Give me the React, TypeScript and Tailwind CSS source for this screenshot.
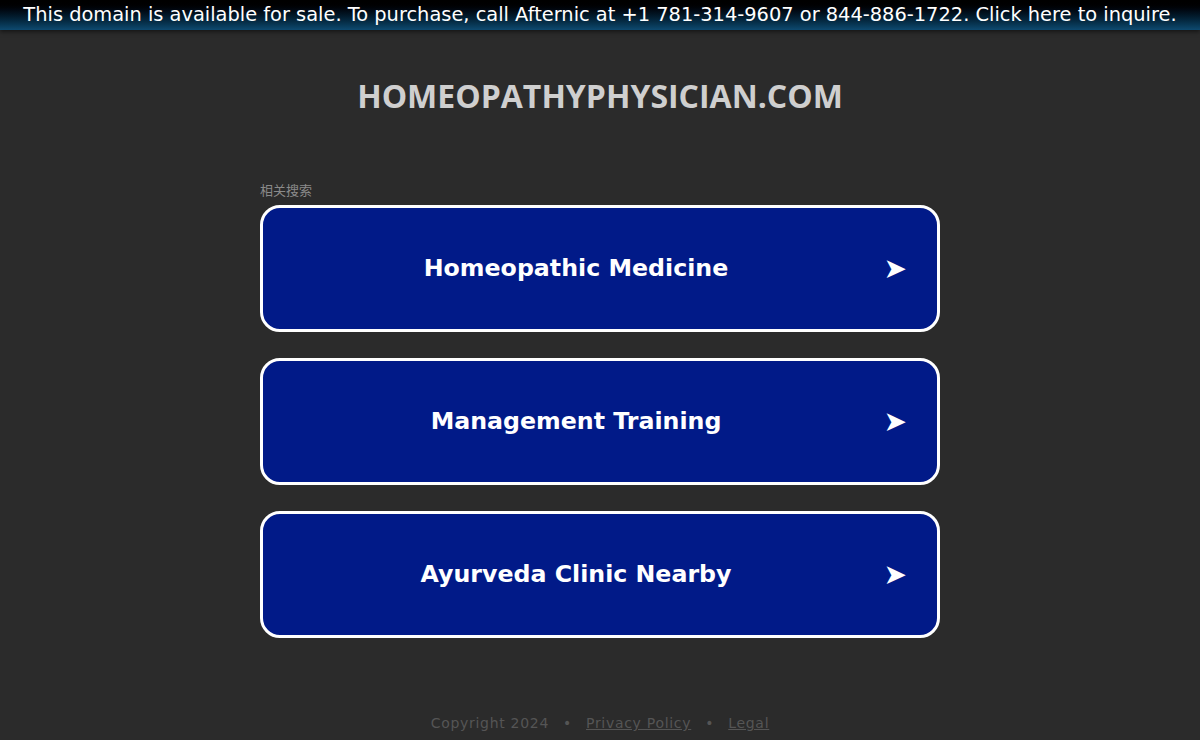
import React from 'react';

const links = ['Homeopathic Medicine', 'Management Training', 'Ayurveda Clinic Nearby'];

export default function App() {
  return (
    <div className="min-h-[740px] bg-[#2b2b2b] flex flex-col items-center" style={{ fontFamily: '"DejaVu Sans", Verdana, sans-serif' }}>
      <div className="w-full h-[30px] bg-gradient-to-b from-[#000000] to-[#0e4a70] shadow-[0_2px_4px_rgba(0,0,0,0.5)] flex items-center justify-center">
        <span className="text-white text-[19.4px] leading-none whitespace-nowrap">
          This domain is available for sale. To purchase, call Afternic at +1 781-314-9607 or 844-886-1722. Click here to inquire.
        </span>
      </div>

      <h1
        className="mt-[50px] text-[32px] font-bold text-[#cfcfcf] leading-none"
        style={{ fontFamily: '"Open Sans", sans-serif' }}
      >
        HOMEOPATHYPHYSICIAN.COM
      </h1>

      <div className="w-[680px] mt-[71px]">
        <div
          className="text-[13px] text-[#8a8a8a] leading-none mb-[9px]"
          style={{ fontFamily: '"Noto Sans CJK SC", sans-serif' }}
        >
          相关搜索
        </div>
        <div className="flex flex-col gap-[26px]">
          {links.map((label) => (
            <a
              key={label}
              href="#"
              className="relative h-[127px] rounded-[20px] border-[3px] border-white bg-[#011a88] flex items-center justify-center pr-[48px]"
            >
              <span className="text-white font-bold text-[23.7px]">{label}</span>
              <span className="absolute right-[30px] text-white text-[28px] leading-none">➤</span>
            </a>
          ))}
        </div>
      </div>

      <div className="mt-[75px] text-[14px] tracking-[0.7px] text-[#555555] flex items-center gap-[14px]">
        <span>Copyright 2024</span>
        <span>•</span>
        <a href="#" className="underline">Privacy Policy</a>
        <span>•</span>
        <a href="#" className="underline">Legal</a>
      </div>
    </div>
  );
}
